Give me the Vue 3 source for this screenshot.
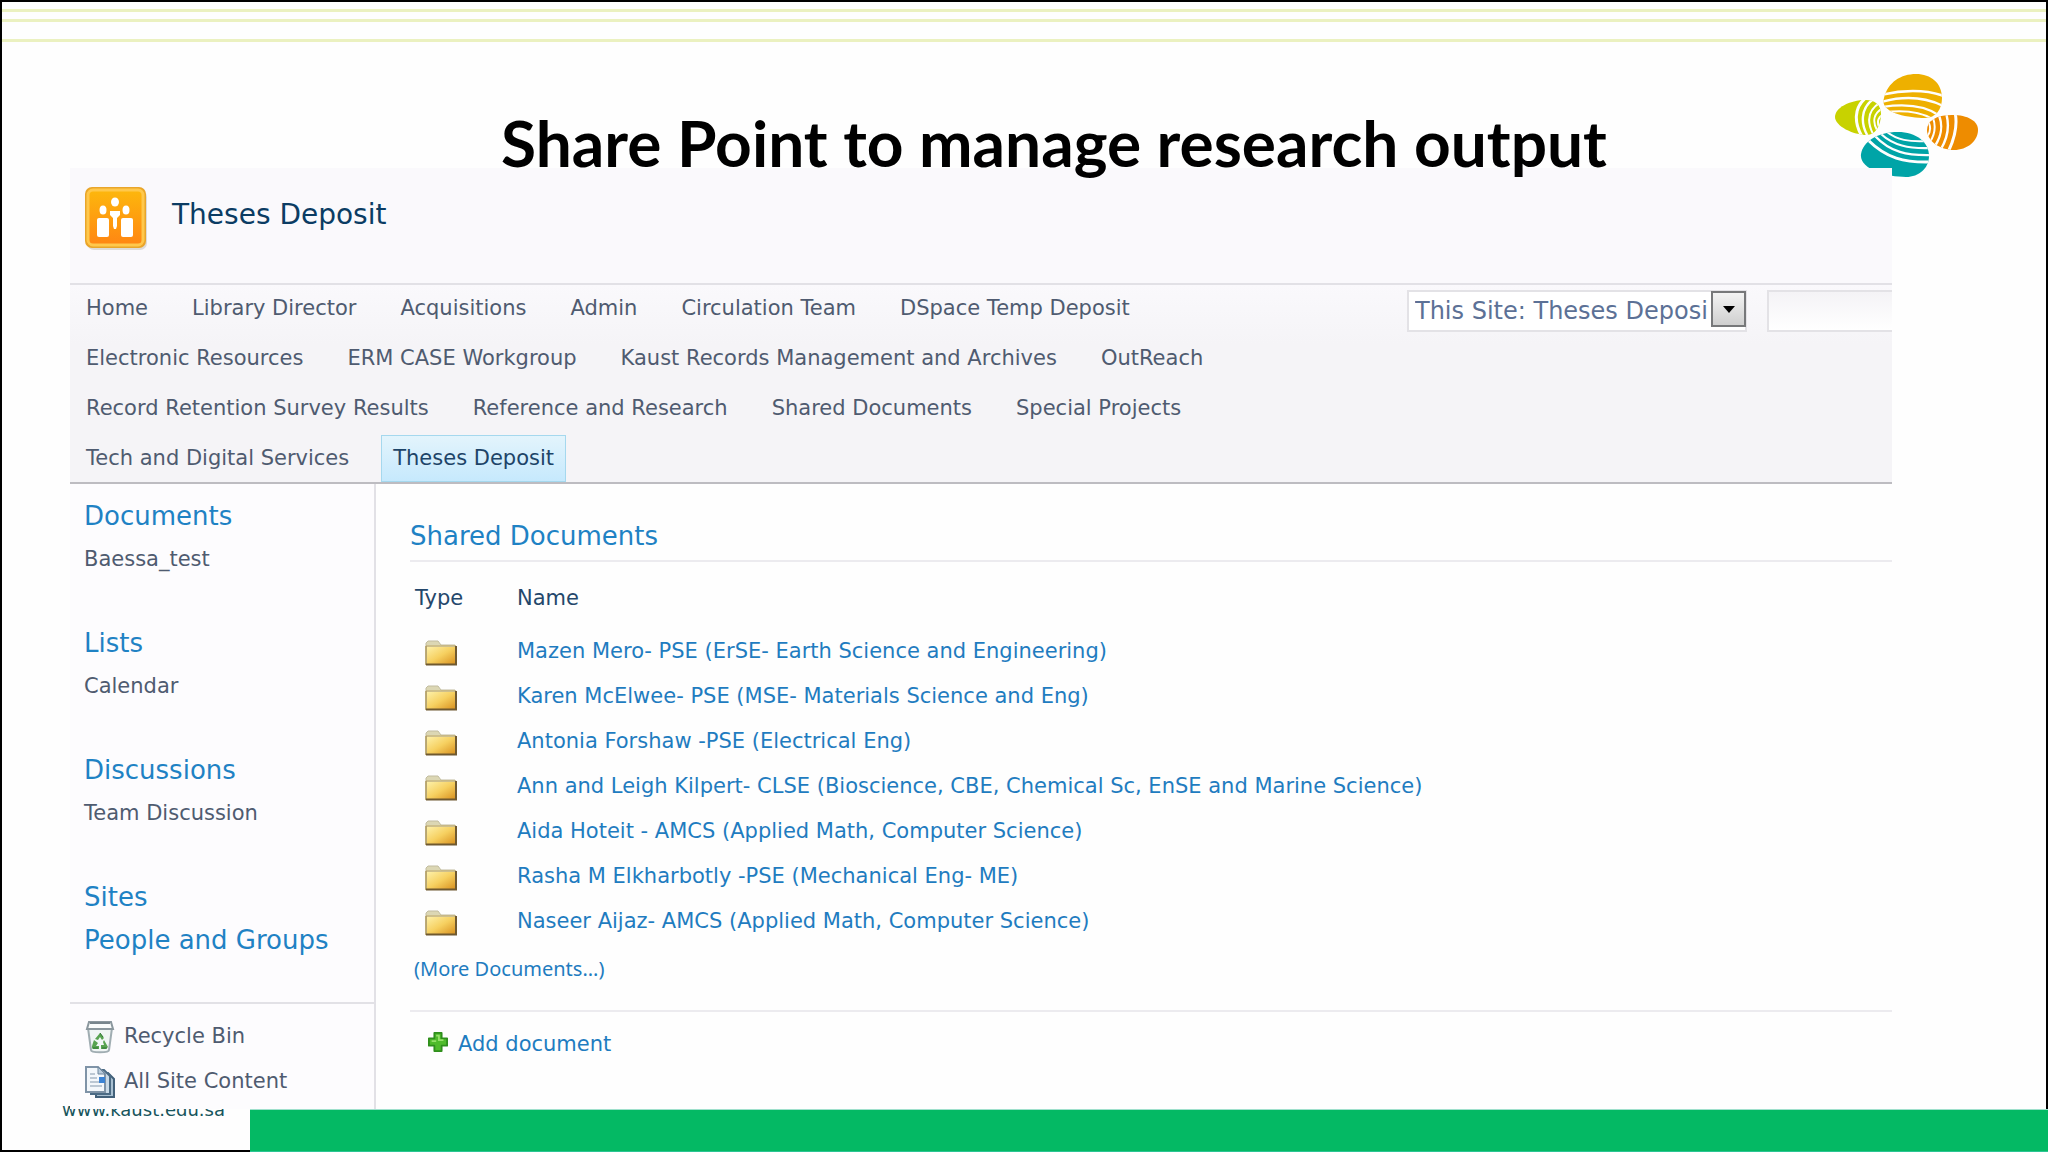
<template>
  <div class="slide">
    <div class="stripes">
      <span class="stripe"></span>
      <span class="stripe"></span>
      <span class="stripe stripe-last"></span>
    </div>

    <svg class="logo" viewBox="0 0 150 114" aria-label="KAUST">
      <defs>
        <clipPath id="petal-top"><path d="M51 28C55 12 68 4 83 4c15 0 26 9 26 24 0 11-6 20-17 20-17 0-46-5-41-20z" /></clipPath>
        <clipPath id="petal-left"><path d="M2 47c0-9 14-17 31-17 9 0 15 5 15 14 0 12-6 21-14 21C20 65 2 56 2 47z" /></clipPath>
        <clipPath id="petal-right"><path d="M94 60c0-9 9-15 25-15 16 0 26 6 26 15 0 11-11 20-24 20-14 0-27-9-27-20z" /></clipPath>
        <clipPath id="petal-bottom"><path d="M28 84c2-12 16-22 37-22 18 0 31 10 31 24 0 12-10 21-23 21-20 0-47-8-45-23z" /></clipPath>
      </defs>
      <g fill="none" stroke="#fefefe">
        <g clip-path="url(#petal-top)">
          <rect width="150" height="114" fill="#eeb000" stroke="none" />
          <path stroke-width="2.6" d="M48 25c20-5 44-6 63 1" />
          <path stroke-width="2.4" d="M48 32c22-6 44-5 62 4" />
          <path stroke-width="2.2" d="M49 37c20-3 43-2 58 9" />
          <path stroke-width="2" d="M52 42c18-2 36-1 49 8" />
        </g>
        <g clip-path="url(#petal-left)">
          <rect width="150" height="114" fill="#c8d200" stroke="none" />
          <path stroke-width="3" d="M34 27c-14 10-13 27-4 41" />
          <path stroke-width="2.4" d="M42 28c-15 9-15 27-6 40" />
          <path stroke-width="2" d="M48 32c-14 8-14 20-8 32M50 38c-9 5-11 13-6 22M51 44c-6 3-7 8-5 13" />
        </g>
        <g clip-path="url(#petal-right)">
          <rect width="150" height="114" fill="#ee8c00" stroke="none" />
          <path stroke-width="3" d="M122 42c3 14 0 26-7 40" />
          <path stroke-width="2.4" d="M113 43c4 13 2 24-5 36M106 45c4 11 3 20-4 31" />
          <path stroke-width="2" d="M100 48c3 8 2 16-3 24M96 53c2 5 1 10-2 14" />
        </g>
        <g clip-path="url(#petal-bottom)">
          <rect width="150" height="114" fill="#00a4a7" stroke="none" />
          <path stroke-width="3" d="M35 70c18 18 36 23 64 22" />
          <path stroke-width="2.4" d="M42 66c15 16 32 20 58 19" />
          <path stroke-width="2.2" d="M48 64c12 11 27 15 50 14" />
          <path stroke-width="2" d="M54 62c10 8 22 10 40 9" />
        </g>
      </g>
    </svg>

    <h1 class="slide-title">Share Point to manage research output</h1>

    <div class="site">
      <header class="site-header">
        <svg class="site-icon" viewBox="0 0 64 64" aria-hidden="true">
          <defs>
            <linearGradient id="site-fill" x1="0" y1="0" x2="0" y2="1">
              <stop offset="0" stop-color="#fdb90c" />
              <stop offset="1" stop-color="#ff8413" />
            </linearGradient>
          </defs>
          <rect x="3" y="4" width="60" height="60" rx="7" fill="#dedbd8" />
          <rect x="2" y="2" width="59" height="59" rx="6" fill="url(#site-fill)" stroke="#e9a62a" stroke-width="2" />
          <rect x="4" y="4" width="55" height="55" rx="5" fill="none" stroke="#ffc84c" stroke-width="3" />
          <g fill="#fff">
            <ellipse cx="31" cy="16" rx="4" ry="4.500" />
            <ellipse cx="19" cy="24" rx="3.500" ry="4.500" />
            <ellipse cx="42" cy="24" rx="3.500" ry="4.500" />
            <path d="M26 25h10v4l-3 3v8l-1 3h-2l-1-3v-8l-3-3z" />
            <rect x="13" y="32" width="12" height="19" rx="2" />
            <rect x="37" y="32" width="12" height="19" rx="2" />
          </g>
        </svg>
        <h2 class="site-name">Theses Deposit</h2>
      </header>

      <div class="top-bar">
        <nav class="top-nav">
          <a
            v-for="item in navItems"
            :key="item"
            href="#"
            :class="['nav-link', { active: item === activeItem }]"
          >{{ item }}</a>
        </nav>
        <form class="search" @submit.prevent>
          <div class="scope">
            <select v-model="scope" class="scope-select" aria-label="Search scope">
              <option>This Site: Theses Deposit</option>
            </select>
            <span class="scope-arrow"></span>
          </div>
          <input v-model="query" class="search-box" type="text" aria-label="Search" />
        </form>
      </div>

      <div class="site-body">
        <aside class="sidebar">
          <div class="quick-launch">
            <div v-for="group in groups" :key="group.title" class="group">
              <a href="#" class="group-title">{{ group.title }}</a>
              <a v-for="link in group.links" :key="link" href="#" class="group-link">{{ link }}</a>
            </div>
            <a href="#" class="group-title">Sites</a>
            <a href="#" class="group-title">People and Groups</a>
          </div>
          <div class="tools">
            <a href="#" class="tool-link">
              <svg class="tool-icon" viewBox="0 0 32 34" aria-hidden="true">
                <path d="M4 8h24l-3 22c0 3-18 3-18 0z" fill="#f0f5f5" stroke="#a0adb2" stroke-width="2" />
                <path d="M5 2h22l2 7H3z" fill="#fafcfc" stroke="#8b979e" stroke-width="2" />
                <path d="M6 3h20" stroke="#78858d" stroke-width="2" />
                <path d="M16 13l4 5-2 2-2-3-2 3-3-1zM10 20l4 3-2 3h3v3H9c-2-1-1-3 1-9zM20 20l4 7-2 2h-5v-4h3l-1-3z" fill="#58a351" />
                <path d="M16 13l3 4M9 28h5M23 28h-5" stroke="#2d7432" stroke-width="1" />
              </svg>
              <span>Recycle Bin</span>
            </a>
            <a href="#" class="tool-link">
              <svg class="tool-icon" viewBox="0 0 32 34" aria-hidden="true">
                <path d="M12 8h12l6 6v18H12z" fill="#a9c0d2" stroke="#42607a" stroke-width="2" />
                <path d="M7 5h13l6 6v18H7z" fill="#c9d9e6" stroke="#4c6b85" stroke-width="2" />
                <path d="M2 2h12l7 7v18H2z" fill="#f3f7fb" stroke="#7f93a7" stroke-width="2" />
                <path d="M14 2v7h7z" fill="#b9cbdb" stroke="#6f879e" stroke-width="1" />
                <path d="M6 9h5M6 13h7M6 17h12M6 21h12" stroke="#a9b8c6" stroke-width="1.5" />
                <rect x="15" y="12" width="6" height="6" fill="#3c83d4" />
              </svg>
              <span>All Site Content</span>
            </a>
          </div>
        </aside>

        <main class="content">
          <h3 class="list-title"><a href="#">Shared Documents</a></h3>
          <table class="documents">
            <thead>
              <tr>
                <th class="type-col">Type</th>
                <th>Name</th>
              </tr>
            </thead>
            <tbody>
              <tr v-for="doc in documents" :key="doc">
                <td class="type-cell">
                  <svg class="folder" viewBox="0 0 32 26" aria-label="Folder">
                    <defs>
                      <linearGradient id="folder-fill" x1="0" y1="0" x2="1" y2="1">
                        <stop offset="0" stop-color="#fdf0a8" />
                        <stop offset="0.5" stop-color="#f6d060" />
                        <stop offset="1" stop-color="#d99220" />
                      </linearGradient>
                    </defs>
                    <path d="M1 24V3l2-2h10l3 4h14v19z" fill="#dcd7b4" stroke="#c2bda0" stroke-width="1" />
                    <path d="M2 7h28v17H2z" fill="url(#folder-fill)" />
                    <path d="M1 6h30" stroke="#bfa765" stroke-width="1" />
                    <path d="M1 6v19" stroke="#b09a5c" stroke-width="1.5" />
                    <path d="M31 6v18.500H1" fill="none" stroke="#6f5930" stroke-width="2" />
                  </svg>
                </td>
                <td><a href="#">{{ doc }}</a></td>
              </tr>
            </tbody>
          </table>
          <a href="#" class="more">(More Documents...)</a>
          <div class="add-row">
            <button type="button" class="add-button">
              <svg class="plus" viewBox="0 0 22 22" aria-hidden="true">
                <path d="M7 1h8v6h6v8h-6v6H7v-6H1V7h6z" fill="#4fbb2b" stroke="#2f8f1c" stroke-width="2" stroke-linejoin="round" />
                <path d="M9 4h3v5h5M4 10h5" fill="none" stroke="#94e068" stroke-width="2" />
              </svg>
              <span>Add document</span>
            </button>
          </div>
        </main>
      </div>
    </div>

    <footer class="slide-footer">
      <a href="#" class="footer-url">www.kaust.edu.sa</a>
      <div class="footer-bar"></div>
    </footer>
  </div>
</template>

<script setup>
import { ref } from 'vue'

const scope = ref('This Site: Theses Deposit')
const query = ref('')
const activeItem = 'Theses Deposit'

const navItems = [
  'Home',
  'Library Director',
  'Acquisitions',
  'Admin',
  'Circulation Team',
  'DSpace Temp Deposit',
  'Electronic Resources',
  'ERM CASE Workgroup',
  'Kaust Records Management and Archives',
  'OutReach',
  'Record Retention Survey Results',
  'Reference and Research',
  'Shared Documents',
  'Special Projects',
  'Tech and Digital Services',
  'Theses Deposit'
]

const groups = [
  { title: 'Documents', links: ['Baessa_test'] },
  { title: 'Lists', links: ['Calendar'] },
  { title: 'Discussions', links: ['Team Discussion'] }
]

const documents = [
  'Mazen Mero- PSE (ErSE- Earth Science and Engineering)',
  'Karen McElwee- PSE (MSE- Materials Science and Eng)',
  'Antonia Forshaw -PSE (Electrical Eng)',
  'Ann and Leigh Kilpert- CLSE (Bioscience, CBE, Chemical Sc, EnSE and Marine Science)',
  'Aida Hoteit - AMCS (Applied Math, Computer Science)',
  'Rasha M Elkharbotly -PSE (Mechanical Eng- ME)',
  'Naseer Aijaz- AMCS (Applied Math, Computer Science)'
]
</script>

<style>
body {
  margin: 0;
}
</style>

<style scoped>
.slide {
  position: relative;
  display: flex;
  flex-direction: column;
  box-sizing: border-box;
  min-height: 100vh;
  border: 2px solid #000;
  background: #fefefe;
  font-family: "DejaVu Sans", Verdana, sans-serif;
  font-size: 21px;
  color: #4f5b70;
}

a {
  color: inherit;
  text-decoration: none;
}

.stripes {
  display: flex;
  flex-direction: column;
  gap: 7px;
  padding-top: 7px;
}

.stripe {
  height: 3px;
  background: #ebf1c0;
}

.stripe-last {
  margin-top: 10px;
}

.logo {
  position: absolute;
  top: 68px;
  right: 63px;
  width: 150px;
  height: 114px;
}

.slide-title {
  position: relative;
  z-index: 2;
  margin: 62px 0 -14px;
  padding-left: 60px;
  font-family: Lato, Calibri, sans-serif;
  font-size: 64px;
  line-height: 78px;
  font-weight: 700;
  text-align: center;
  color: #000;
}

.site {
  position: relative;
  z-index: 1;
  flex: 1;
  display: flex;
  flex-direction: column;
  margin: 0 154px 0 68px;
  overflow: hidden;
  background: #fefefe;
}

.site-header {
  display: flex;
  align-items: flex-start;
  gap: 24px;
  padding: 18px 14px 33px;
  border-bottom: 2px solid #e2e1e6;
  background: #faf9fc;
}

.site-icon {
  width: 64px;
  height: 64px;
}

.site-name {
  margin: 11px 0 0;
  font-size: 28px;
  line-height: 36px;
  font-weight: 400;
  color: #0b3c63;
}

.top-bar {
  display: flex;
  justify-content: space-between;
  border-bottom: 2px solid #bdbcc1;
  background: linear-gradient(#faf9fc, #f5f4f7 30%);
}

.top-nav {
  flex: 1;
  display: flex;
  flex-wrap: wrap;
  gap: 3px 20px;
  padding: 0 60px 0 4px;
}

.nav-link {
  padding: 0 11px;
  border: 1px solid transparent;
  line-height: 45px;
}

.nav-link.active {
  border-color: #a5d8ee;
  background: linear-gradient(#e3f4fc, #c6e9fd);
  color: #1d4468;
}

.search {
  display: flex;
  gap: 20px;
  width: 485px;
  padding-top: 5px;
}

.scope {
  position: relative;
  flex: none;
  width: 340px;
  height: 42px;
}

.scope-select {
  appearance: none;
  box-sizing: border-box;
  width: 100%;
  height: 100%;
  padding: 0 37px 0 6px;
  border: 2px solid #e3e2e6;
  border-radius: 0;
  background: #fff;
  font-family: inherit;
  font-size: 24px;
  color: #5c7196;
}

.scope-arrow {
  position: absolute;
  top: 1px;
  right: 1px;
  box-sizing: border-box;
  width: 35px;
  height: 36px;
  border: 2px solid #77787a;
  background: linear-gradient(#f3f3f3, #cfcfcf);
  pointer-events: none;
}

.scope-arrow::after {
  content: "";
  position: absolute;
  top: 13px;
  left: 10px;
  border: 6px solid transparent;
  border-top: 7px solid #000;
  border-bottom: 0;
}

.search-box {
  flex: none;
  box-sizing: border-box;
  width: 240px;
  height: 42px;
  border: 2px solid #e3e2e6;
  background: linear-gradient(#f4f3f6, #fff);
  font-size: 21px;
}

.site-body {
  flex: 1;
  display: flex;
}

.sidebar {
  flex: none;
  width: 304px;
  border-right: 2px solid #e2e1e6;
  background: #fdfcfe;
}

.quick-launch {
  padding: 11px 14px 40px;
  border-bottom: 2px solid #e2e1e6;
}

.group {
  margin-bottom: 41px;
}

.group-title,
.group-link {
  display: block;
  line-height: 43px;
}

.group-title {
  font-size: 26px;
  color: #1f82c4;
}

.tools {
  padding: 10px 14px 4px;
}

.tool-link {
  display: flex;
  align-items: center;
  gap: 8px;
  line-height: 45px;
}

.tool-icon {
  width: 32px;
  height: 34px;
}

.content {
  flex: 1;
  padding: 31px 0 0 34px;
  color: #1f7cc0;
}

.list-title {
  margin: 0;
  padding-bottom: 2px;
  border-bottom: 2px solid #ecebef;
  font-size: 26px;
  line-height: 43px;
  font-weight: 400;
  color: #1f82c4;
}

.documents {
  margin-top: 12px;
  border-collapse: collapse;
}

.documents th {
  box-sizing: border-box;
  height: 54px;
  padding: 0 0 6px;
  font-weight: 400;
  text-align: left;
  color: #24476b;
}

.documents .type-col {
  width: 107px;
  padding-left: 5px;
}

.documents td {
  box-sizing: border-box;
  height: 45px;
  padding: 0;
}

.documents .type-cell {
  padding: 5px 0 0 15px;
}

.folder {
  display: block;
  width: 32px;
  height: 26px;
}

.more {
  display: block;
  padding: 3px 0 19px 4px;
  border-bottom: 2px solid #ecebef;
  font-family: "Noto Sans", Tahoma, sans-serif;
  font-size: 20px;
  line-height: 45px;
}

.add-row {
  padding: 10px 0 0 18px;
}

.add-button {
  display: flex;
  align-items: flex-start;
  gap: 10px;
  padding: 0;
  border: 0;
  background: none;
  font-family: inherit;
  font-size: inherit;
  line-height: 45px;
  color: inherit;
  cursor: pointer;
}

.plus {
  width: 20px;
  height: 20px;
  margin-top: 10px;
}

.slide-footer {
  display: flex;
  height: 41px;
}

.footer-url {
  flex: none;
  width: 188px;
  margin-top: -12px;
  padding-left: 60px;
  font-size: 18px;
  line-height: 26px;
  color: #17555c;
}

.footer-bar {
  position: relative;
  flex: 1;
  box-sizing: border-box;
  margin: 0 -2px -2px 0;
  border-top: 1px solid #9fe0cc;
  border-bottom: 1px solid #2cc594;
  background: #04b964;
}
</style>
